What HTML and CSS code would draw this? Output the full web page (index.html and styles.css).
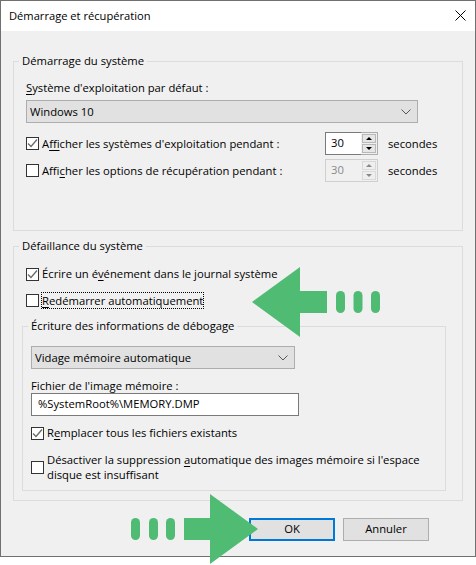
FILE: index.html

```html
<!DOCTYPE html>
<html lang="fr">
  <head>
    <meta charset="utf-8">
    <title>Démarrage et récupération</title>
    <link rel="stylesheet" href="styles.css">
  </head>
  <body>
  <div class="win">
    <div class="titlebar">
      <span>Démarrage et récupération</span>
      <svg class="close" width="11" height="11" viewBox="0 0 11 11"><path d="M0.5 0.5L10.5 10.5M10.5 0.5L0.5 10.5" stroke="#000" fill="none"/></svg>
    </div>
    <div class="main">
      <fieldset class="grp grp1">
        <legend>Démarrage du système</legend>
        <div class="lbl"><u>S</u>ystème d'exploitation par défaut :</div>
        <div class="combo combo-os">
          <span>Windows 10</span>
          <svg width="10" height="6" viewBox="0 0 10 6"><path d="M0.5 0.5L5 5L9.5 0.5" stroke="#555" fill="none"/></svg>
        </div>
        <div class="spinrow spinrow1">
          <div class="chk-row">
            <span class="box"><svg width="11" height="11" viewBox="0 0 11 11"><path d="M1 5.5L4 8.5L10 1.5" stroke="#6a6a6a" stroke-width="1.3" fill="none"/></svg></span>
            <span>A<u>f</u>ficher les systèmes d'exploitation pendant :</span>
          </div>
          <div class="spin">
            <div class="spin-val">30</div>
            <div class="spin-btns">
              <div class="spin-btn"><i class="up"></i></div>
              <div class="spin-btn"><i class="down"></i></div>
            </div>
          </div>
          <span class="unit">secondes</span>
        </div>
        <div class="spinrow spinrow2">
          <div class="chk-row">
            <span class="box"></span>
            <span>Affi<u>c</u>her les options de récupération pendant :</span>
          </div>
          <div class="spin off">
            <div class="spin-val">30</div>
            <div class="spin-btns">
              <div class="spin-btn"><i class="up"></i></div>
              <div class="spin-btn"><i class="down"></i></div>
            </div>
          </div>
          <span class="unit">secondes</span>
        </div>
      </fieldset>

      <fieldset class="grp grp2">
        <legend>Défaillance du système</legend>
        <div class="chk-row chk-ecrire">
          <span class="box"><svg width="11" height="11" viewBox="0 0 11 11"><path d="M1 5.5L4 8.5L10 1.5" stroke="#6a6a6a" stroke-width="1.3" fill="none"/></svg></span>
          <span>Écrire un é<u>v</u>énement dans le journal système</span>
        </div>
        <div class="chk-row chk-redem">
          <span class="box"></span>
          <span class="focus"><u>R</u>edémarrer automatiquement</span>
        </div>

        <fieldset class="grp inner">
          <legend>Écriture des informations de débogage</legend>
          <div class="combo combo-dump">
            <span>Vidage mémoire automatique</span>
            <svg width="10" height="6" viewBox="0 0 10 6"><path d="M0.5 0.5L5 5L9.5 0.5" stroke="#555" fill="none"/></svg>
          </div>
          <div class="lbl lbl-file">Fichier de l'image mémoire :</div>
          <div class="textbox">%SystemRoot%\MEMORY.DMP</div>
          <div class="chk-row chk-rempl">
            <span class="box"><svg width="11" height="11" viewBox="0 0 11 11"><path d="M1 5.5L4 8.5L10 1.5" stroke="#6a6a6a" stroke-width="1.3" fill="none"/></svg></span>
            <span>R<u>e</u>mplacer tous les fichiers existants</span>
          </div>
          <div class="chk-row chk-desact">
            <span class="box"></span>
            <span class="wrap">Désactiver la suppression <u>a</u>utomatique des images mémoire si l'espace disque est insuffisant</span>
          </div>
        </fieldset>
      </fieldset>

      <div class="footer">
        <div class="btn btn-def">OK</div>
        <div class="btn">Annuler</div>
      </div>
    </div>
  </div>

  <svg class="arrows" width="476" height="565" viewBox="0 0 476 565">
    <g fill="#50bb73">
      <path d="M252 302L300 267V291H327V313H300V337Z"/>
      <rect x="336" y="291" width="9" height="22" rx="4.5"/>
      <rect x="353.5" y="291" width="9" height="22" rx="4.5"/>
      <rect x="371" y="291" width="9" height="22" rx="4.5"/>
      <path d="M258 529L210 494V518H184V540H210V564Z"/>
      <rect x="131" y="518" width="9" height="22" rx="4.5"/>
      <rect x="149" y="518" width="9" height="22" rx="4.5"/>
      <rect x="166" y="518" width="9" height="22" rx="4.5"/>
    </g>
  </svg>
  </body>
</html>
```

FILE: styles.css

```css
html, body { margin: 0; padding: 0; background: #fff; }
body { position: relative; width: 476px; height: 565px; overflow: hidden; font-family: "Open Sans", "Noto Sans", sans-serif; font-size: 11.25px; color: #000; }
u { text-underline-offset: 2px; }

.win { box-sizing: border-box; width: 476px; height: 557px; border: 1px solid #707070; background: #f0f0f0; }
.titlebar { box-sizing: border-box; display: flex; align-items: center; justify-content: space-between; height: 30px; padding: 0 9px 2px 8px; background: #fff; font-size: 11.15px; }
.main { padding: 22px 12px 0 12px; }

.grp { display: block; margin: 0; min-width: 0; border: 1px solid #dcdcdc; }
.grp legend { height: 16px; line-height: 16px; margin-left: -7px; padding: 0 3px; }
.grp1 { padding: 11px 0 48px 12px; }
.grp2 { margin-top: 7px; padding: 12px 0 9px 12px; }
.inner { box-sizing: border-box; width: 424px; margin: 10px 0 0 -4px; padding: 12px 0 8px 8px; }
.inner legend { margin-left: -3px; }

.lbl { height: 16px; line-height: 16px; }
.lbl-file { height: 15px; line-height: 15px; margin-top: 9px; }

.combo { box-sizing: border-box; display: flex; align-items: center; justify-content: space-between; height: 23px; padding: 0 6px 0 3px; border: 1px solid #adadad; background: #e1e1e1; }
.combo-os { width: 392px; margin-top: 4px; }
.combo-dump { width: 264px; }

.chk-row { display: flex; align-items: center; gap: 3px; line-height: 16px; }
.box { box-sizing: border-box; display: flex; align-items: center; justify-content: center; flex: none; width: 13px; height: 13px; border: 1px solid #333; background: #fff; }
.chk-redem { margin-top: 10px; height: 16px; }
.chk-rempl { margin-top: 9px; }
.chk-desact { margin-top: 11px; }
.focus { margin-left: -1px; border: 1px dotted #000; white-space: nowrap; line-height: 15px; }
.wrap { width: 385px; line-height: 15px; }

.spinrow { display: grid; grid-template-columns: 299px 53px auto; align-items: center; }
.spinrow1 { margin-top: 9px; }
.spinrow2 { margin-top: 4px; }
.unit { margin-left: 10px; }

.spin { box-sizing: border-box; display: flex; width: 53px; height: 23px; }
.spin-val { box-sizing: border-box; width: 36px; padding-left: 5px; line-height: 20px; border: 1px solid #7a7a7a; border-right: 0; background: #fff; }
.spin-btns { box-sizing: border-box; display: grid; grid-template-rows: 1fr 1fr; gap: 1px; width: 17px; padding: 1px; border: 1px solid #adadad; border-left: 0; }
.spin-btn { display: flex; align-items: center; justify-content: center; border: 1px solid #b8b8b8; background: #e6e6e6; }
.spin-btn i { width: 0; height: 0; border-left: 3px solid transparent; border-right: 3px solid transparent; }
.spin-btn .up { border-bottom: 3px solid #000; }
.spin-btn .down { border-top: 3px solid #000; }
.off .spin-val { border-color: #cfcfcf; background: #f0f0f0; color: #8a8a8a; }
.off .spin-btns { border-color: #cfcfcf; }
.off .spin-btn { border-color: #d9d9d9; background: #efefef; }
.off .up { border-bottom-color: #8a8a8a; }
.off .down { border-top-color: #8a8a8a; }

.textbox { box-sizing: border-box; width: 268px; height: 23px; padding-left: 6px; line-height: 20px; border: 1px solid #7a7a7a; background: #fff; }

.footer { display: flex; justify-content: flex-end; gap: 8px; margin-top: 17px; padding-right: 34px; }
.btn { box-sizing: border-box; width: 86px; height: 23px; line-height: 20px; text-align: center; border: 1px solid #adadad; background: #e1e1e1; }
.btn-def { border: 2px solid #0078d7; line-height: 18px; }

.arrows { position: absolute; left: 0; top: 0; pointer-events: none; }
```
